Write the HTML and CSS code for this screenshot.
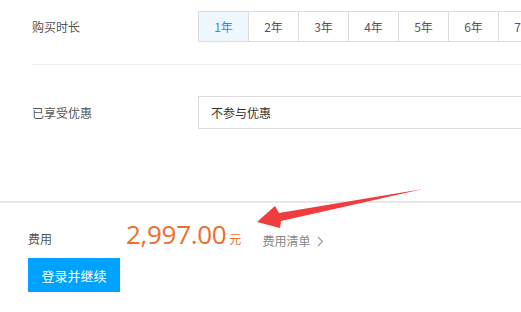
FILE: index.html
```html
<!DOCTYPE html>
<html>
<head>
    <meta charset="UTF-8">
    <title>购买</title>
    <link rel="stylesheet" href="styles.css">
</head>
<body>
    <div class="form">
        <div class="row">
            <div class="label">购买时长</div>
            <div class="tabs">
                <div class="tab active">1年</div>
                <div class="tab">2年</div>
                <div class="tab">3年</div>
                <div class="tab">4年</div>
                <div class="tab">5年</div>
                <div class="tab">6年</div>
                <div class="tab">7年</div>
            </div>
        </div>
        <div class="divider"></div>
        <div class="row discount">
            <div class="label">已享受优惠</div>
            <div class="select">不参与优惠</div>
        </div>
    </div>

    <div class="footer">
        <div class="fee-row">
            <div class="fee-label">费用</div>
            <div class="price">2,997.00</div>
            <div class="unit">元</div>
            <a class="fee-list">费用清单<svg class="chev" width="7" height="11" viewBox="0 0 7 11"><path d="M1 1 L5.5 5.5 L1 10" fill="none" stroke="#999" stroke-width="1.1"/></svg></a>
        </div>
        <button class="submit">登录并继续</button>
    </div>

    <svg class="arrow" width="180" height="55" viewBox="0 0 180 55">
        <polygon points="7,42 25,26 29,33 173,9 31,41 30,48" fill="#f03c3c"/>
    </svg>
</body>
</html>
```

FILE: styles.css
```css
html, body { margin: 0; padding: 0; }
body { font-family: "Noto Sans CJK SC", "Noto Sans", sans-serif; font-size: 12px; color: #555; width: 521px; height: 312px; overflow: hidden; position: relative; background: #fff; }
.form { padding: 11px 0 0 32px; }
.row { display: flex; align-items: center; }
.label { width: 166px; flex: none; color: #555; }
.tabs { display: flex; flex: none; }
.tab { width: 49px; height: 29px; line-height: 29px; text-align: center; border: 1px solid #ddd; margin-left: -1px; color: #555; }
.tab:first-child { margin-left: 0; }
.tab.active { background: #eef6fe; color: #2b8be8; }
.divider { height: 1px; background: #ececec; margin-top: 22px; }
.discount { margin-top: 31px; }
.select { flex: none; width: 400px; height: 31px; line-height: 31px; border: 1px solid #ddd; padding-left: 12px; color: #333; }
.footer { margin-top: 72px; border-top: 2px solid #e8e8e8; padding: 15px 28px 0; }
.fee-row { display: flex; align-items: baseline; }
.fee-label { width: 98px; color: #555; }
.price { font-family: "Open Sans", "Noto Sans", sans-serif; font-size: 26px; line-height: 32px; color: #ef6c2f; letter-spacing: -0.3px; }
.unit { color: #ef6c2f; margin-left: 3px; }
.fee-list { margin-left: 21px; color: #888; position: relative; top: 2px; }
.chev { margin-left: 7px; vertical-align: -1px; }
.submit { display: block; margin-top: 8px; width: 92px; height: 34px; border: none; background: #00a2ff; color: #fff; font-family: "Noto Sans CJK SC", sans-serif; font-size: 13px; padding: 0; }
.arrow { position: absolute; left: 250px; top: 180px; }
```
